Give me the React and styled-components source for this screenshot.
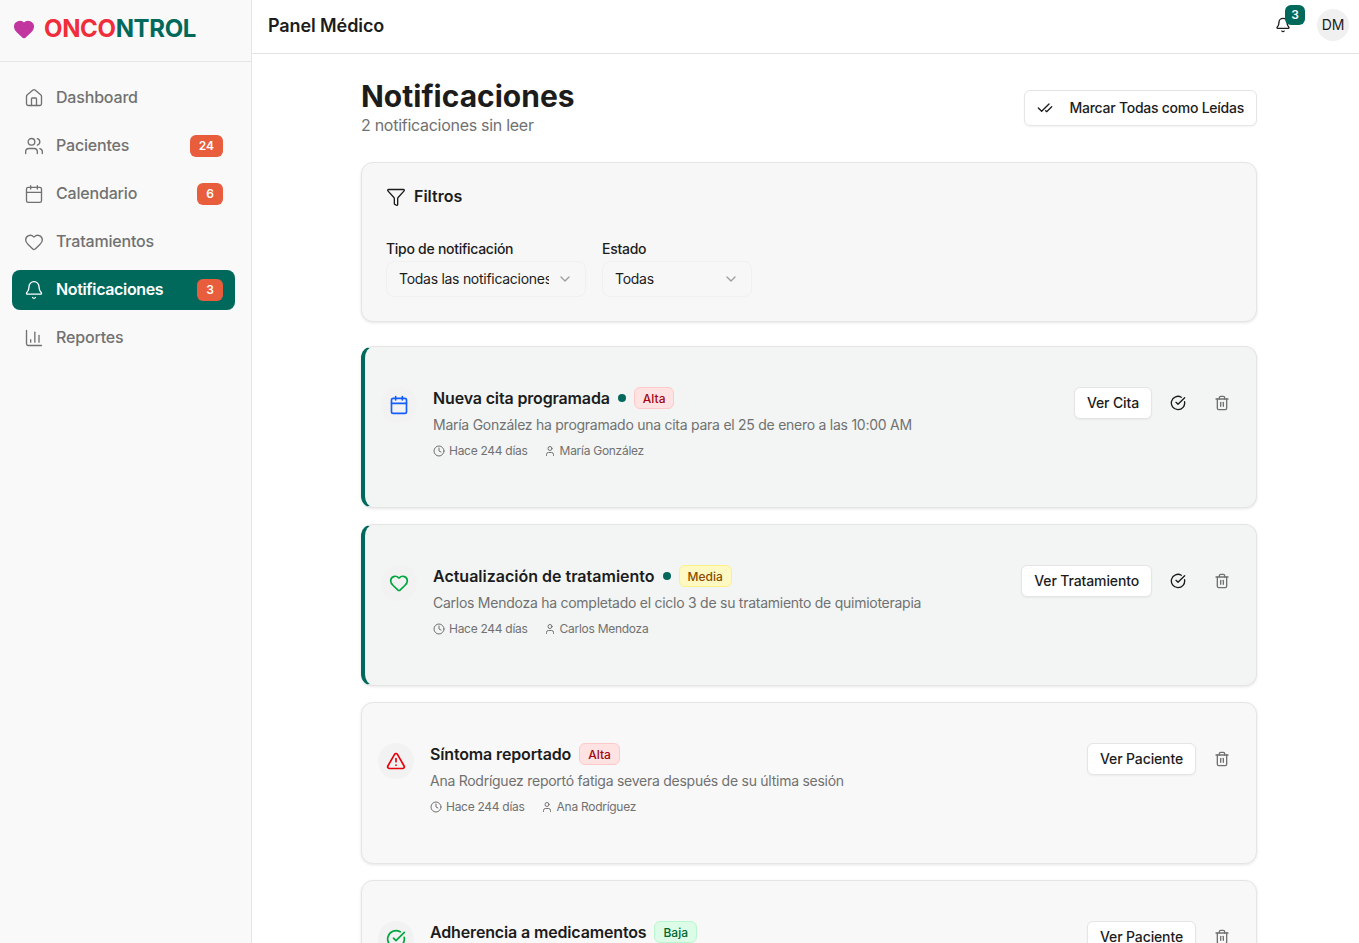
import React from "react";
import styled, { createGlobalStyle } from "styled-components";
import {
  House,
  Users,
  Calendar,
  Heart,
  Bell,
  ChartColumn,
  CheckCheck,
  Funnel,
  ChevronDown,
  Clock,
  User,
  CircleCheckBig,
  Trash2,
  TriangleAlert,
} from "lucide-react";

const GlobalStyle = createGlobalStyle`
  html, body {
    margin: 0;
    padding: 0;
    height: 100%;
    background: #fff;
    font-family: Inter, "Liberation Sans", sans-serif;
    color: #1c1c1c;
  }
  * { box-sizing: border-box; }
`;

const navItems = [
  { label: "Dashboard", icon: House },
  { label: "Pacientes", icon: Users, count: 24 },
  { label: "Calendario", icon: Calendar, count: 6 },
  { label: "Tratamientos", icon: Heart },
  { label: "Notificaciones", icon: Bell, count: 3, active: true },
  { label: "Reportes", icon: ChartColumn },
];

const notifications = [
  {
    title: "Nueva cita programada",
    text: "María González ha programado una cita para el 25 de enero a las 10:00 AM",
    person: "María González",
    priority: "Alta",
    action: "Ver Cita",
    icon: Calendar,
    color: "#155dfc",
    unread: true,
  },
  {
    title: "Actualización de tratamiento",
    text: "Carlos Mendoza ha completado el ciclo 3 de su tratamiento de quimioterapia",
    person: "Carlos Mendoza",
    priority: "Media",
    action: "Ver Tratamiento",
    icon: Heart,
    color: "#00a63e",
    unread: true,
    wideTitle: true,
  },
  {
    title: "Síntoma reportado",
    text: "Ana Rodríguez reportó fatiga severa después de su última sesión",
    person: "Ana Rodríguez",
    priority: "Alta",
    action: "Ver Paciente",
    icon: TriangleAlert,
    color: "#e7000b",
  },
  {
    title: "Adherencia a medicamentos",
    priority: "Baja",
    action: "Ver Paciente",
    icon: CircleCheckBig,
    color: "#00a63e",
  },
];

const priorityColors = {
  Alta: { bg: "#ffe2e2", border: "#ffc9c9", text: "#9f0712" },
  Media: { bg: "#fef9c2", border: "#fff085", text: "#894b00" },
  Baja: { bg: "#dcfce7", border: "#b9f8cf", text: "#016630" },
};

export default function App() {
  return (
    <Shell>
      <GlobalStyle />
      <Sidebar>
        <Brand>
          <Heart size={22} fill="#c236a0" color="#c236a0" />
          <BrandName>
            <span>ONCO</span>
            <b>NTROL</b>
          </BrandName>
        </Brand>
        <Nav>
          {navItems.map((item) => (
            <NavItem key={item.label} $active={item.active}>
              <item.icon size={20} strokeWidth={1.6} />
              <NavLabel $active={item.active}>{item.label}</NavLabel>
              {item.count && <NavCount>{item.count}</NavCount>}
            </NavItem>
          ))}
        </Nav>
      </Sidebar>
      <Main>
        <TopBar>
          <PageName>Panel Médico</PageName>
          <TopActions>
            <BellWrap>
              <Bell size={16} />
              <BellCount>3</BellCount>
            </BellWrap>
            <Avatar>DM</Avatar>
          </TopActions>
        </TopBar>
        <Content>
          <Heading>
            <div>
              <Title>Notificaciones</Title>
              <Subtitle>2 notificaciones sin leer</Subtitle>
            </div>
            <MarkAll>
              <CheckCheck size={16} />
              <ButtonText $tight>Marcar Todas como Leídas</ButtonText>
            </MarkAll>
          </Heading>
          <Filters>
            <FiltersTitle>
              <Funnel size={20} strokeWidth={1.6} />
              <span>Filtros</span>
            </FiltersTitle>
            <FilterRow>
              <div>
                <FilterLabel>Tipo de notificación</FilterLabel>
                <Select $width={200}>
                  <SelectValue>Todas las notificaciones</SelectValue>
                  <ChevronDown size={16} />
                </Select>
              </div>
              <div>
                <FilterLabel>Estado</FilterLabel>
                <Select $width={150}>
                  <SelectValue>Todas</SelectValue>
                  <ChevronDown size={16} />
                </Select>
              </div>
            </FilterRow>
          </Filters>
          <List>
            {notifications.map((n) => (
              <Card key={n.title} $unread={n.unread}>
                <IconCircle style={{ color: n.color }}>
                  <n.icon size={20} />
                </IconCircle>
                <CardBody>
                  <CardTitleRow>
                    <CardTitle $wide={n.wideTitle}>{n.title}</CardTitle>
                    {n.unread && <Dot />}
                    <Priority $level={n.priority}>{n.priority}</Priority>
                  </CardTitleRow>
                  {n.text && <CardText>{n.text}</CardText>}
                  {n.person && (
                    <Meta>
                      <MetaItem>
                        <Clock size={12} />
                        Hace 244 días
                      </MetaItem>
                      <MetaItem>
                        <User size={12} />
                        {n.person}
                      </MetaItem>
                    </Meta>
                  )}
                </CardBody>
                <CardActions>
                  <ActionButton>
                    <ButtonText>{n.action}</ButtonText>
                  </ActionButton>
                  {n.unread && (
                    <IconButton>
                      <CircleCheckBig size={16} />
                    </IconButton>
                  )}
                  <IconButton $muted>
                    <Trash2 size={16} />
                  </IconButton>
                </CardActions>
              </Card>
            ))}
          </List>
        </Content>
      </Main>
    </Shell>
  );
}

const Shell = styled.div`
  display: flex;
  height: 100vh;
  overflow: hidden;
`;

const Sidebar = styled.aside`
  width: 252px;
  flex-shrink: 0;
  background: #f9f9f9;
  border-right: 1px solid #e5e5e5;
`;

const Brand = styled.div`
  height: 62px;
  padding: 0 13px 4px;
  display: flex;
  align-items: center;
  gap: 9px;
  border-bottom: 1px solid #e5e5e5;
`;

const BrandName = styled.div`
  font-size: 24px;
  font-weight: 700;
  letter-spacing: -0.35px;
  span { color: #f02d3a; }
  b { color: #00695c; font-weight: 700; }
`;

const Nav = styled.nav`
  padding: 16px 16px 0 12px;
  display: flex;
  flex-direction: column;
  gap: 8px;
`;

const NavItem = styled.div`
  height: 40px;
  padding: 0 12px;
  display: flex;
  align-items: center;
  gap: 12px;
  border-radius: 8px;
  font-size: 16px;
  font-weight: ${(p) => (p.$active ? 600 : 500)};
  color: ${(p) => (p.$active ? "#fff" : "#717171")};
  background: ${(p) => (p.$active ? "#00695c" : "transparent")};
`;

const NavLabel = styled.span`
  flex: 1;
  padding-bottom: 2px;
  letter-spacing: ${(p) => (p.$active ? "-0.35px" : "-0.18px")};
`;

const NavCount = styled.span`
  height: 22px;
  padding: 0 9px 2px;
  display: flex;
  align-items: center;
  border-radius: 6px;
  background: #e85d3c;
  color: #fff;
  font-size: 12px;
  font-weight: 600;
`;

const Main = styled.div`
  flex: 1;
  min-width: 0;
  display: flex;
  flex-direction: column;
`;

const TopBar = styled.header`
  height: 54px;
  flex-shrink: 0;
  padding: 0 10px 4px 16px;
  display: flex;
  align-items: center;
  justify-content: space-between;
  border-bottom: 1px solid #e5e5e5;
`;

const PageName = styled.h2`
  margin: 1px 0 0;
  font-size: 18px;
  font-weight: 600;
  letter-spacing: -0.1px;
`;

const TopActions = styled.div`
  display: flex;
  align-items: center;
  gap: 26px;
`;

const BellWrap = styled.div`
  position: relative;
  display: flex;
`;

const BellCount = styled.span`
  position: absolute;
  top: -12px;
  left: 10px;
  width: 20px;
  height: 20px;
  display: flex;
  align-items: center;
  justify-content: center;
  border-radius: 6px;
  background: #00695c;
  color: #fff;
  font-size: 12px;
  font-weight: 600;
`;

const Avatar = styled.div`
  width: 32px;
  height: 32px;
  display: flex;
  align-items: center;
  justify-content: center;
  border-radius: 50%;
  background: #f0f0f0;
  font-size: 14px;
`;

const Content = styled.main`
  width: 896px;
  margin-left: 109px;
  padding-top: 24px;
`;

const Heading = styled.div`
  display: flex;
  justify-content: space-between;
  align-items: center;
  margin-bottom: 24px;
`;

const Title = styled.h1`
  margin: 0;
  font-size: 30px;
  line-height: 36px;
  font-weight: 700;
`;

const Subtitle = styled.p`
  margin: 0 0 2px;
  font-size: 16px;
  line-height: 22px;
  letter-spacing: -0.28px;
  color: #717171;
`;

const MarkAll = styled.button`
  height: 36px;
  padding: 0 12px;
  display: flex;
  align-items: center;
  gap: 16px;
  background: #fff;
  border: 1px solid #e5e5e5;
  border-radius: 6px;
  box-shadow: 0 1px 2px rgba(0, 0, 0, 0.05);
  font: 500 14px Inter, sans-serif;
  color: #1c1c1c;
`;

const ButtonText = styled.span`
  display: block;
  padding-bottom: 2px;
  letter-spacing: ${(p) => (p.$tight ? "-0.25px" : "-0.13px")};
`;

const Filters = styled.section`
  height: 160px;
  padding: 24px;
  margin-bottom: 24px;
  background: #f7f7f7;
  border: 1px solid #e5e5e5;
  border-radius: 12px;
  box-shadow: 0 1px 3px rgba(0, 0, 0, 0.1);
`;

const FiltersTitle = styled.div`
  display: flex;
  align-items: center;
  gap: 8px;
  font-size: 16px;
  font-weight: 600;
  margin-bottom: 34px;
  height: 20px;
  span {
    padding-bottom: 2px;
  }
`;

const FilterRow = styled.div`
  display: flex;
  gap: 16px;
`;

const FilterLabel = styled.div`
  font-size: 14px;
  font-weight: 500;
  line-height: 15px;
  letter-spacing: -0.28px;
  margin-bottom: 5px;
`;

const Select = styled.div`
  width: ${(p) => p.$width}px;
  height: 36px;
  padding: 0 12px;
  display: flex;
  align-items: center;
  justify-content: space-between;
  gap: 8px;
  border: 1px solid #f0f0f0;
  border-radius: 8px;
  font-size: 14px;
  letter-spacing: -0.28px;
  svg {
    flex-shrink: 0;
    opacity: 0.4;
  }
`;

const SelectValue = styled.span`
  overflow: hidden;
  white-space: nowrap;
  padding-bottom: 2px;
`;

const List = styled.div`
  display: flex;
  flex-direction: column;
  gap: 16px;
`;

const Card = styled.article`
  min-height: 162px;
  flex-shrink: 0;
  padding: 40px 16px 40px 16px;
  display: flex;
  align-items: flex-start;
  gap: 16px;
  background: ${(p) => (p.$unread ? "#f2f5f4" : "#f8f8f8")};
  border: 1px solid #e5e5e5;
  border-left: ${(p) => (p.$unread ? "4px solid #00695c" : "1px solid #e5e5e5")};
  border-radius: 12px;
  box-shadow: 0 1px 3px rgba(0, 0, 0, 0.1);
`;

const IconCircle = styled.div`
  width: 36px;
  height: 36px;
  flex-shrink: 0;
  display: flex;
  align-items: center;
  justify-content: center;
  border-radius: 50%;
  background: #f2f2f2;
`;

const CardBody = styled.div`
  flex: 1;
  min-width: 0;
`;

const CardTitleRow = styled.div`
  display: flex;
  align-items: center;
  gap: 8px;
  height: 22px;
  margin-bottom: 6px;
`;

const CardTitle = styled.h3`
  margin: 0;
  font-size: 16px;
  font-weight: 600;
  letter-spacing: ${(p) => (p.$wide ? "0" : "-0.15px")};
`;

const Dot = styled.span`
  width: 8px;
  height: 8px;
  border-radius: 50%;
  background: #00695c;
`;

const Priority = styled.span`
  height: 22px;
  padding: 0 8px;
  display: flex;
  align-items: center;
  border-radius: 6px;
  font-size: 12px;
  font-weight: 500;
  background: ${(p) => priorityColors[p.$level].bg};
  border: 1px solid ${(p) => priorityColors[p.$level].border};
  color: ${(p) => priorityColors[p.$level].text};
`;

const CardText = styled.p`
  margin: 0 0 8px;
  font-size: 14px;
  line-height: 20px;
  letter-spacing: -0.26px;
  color: #717171;
`;

const Meta = styled.div`
  display: flex;
  gap: 16px;
  font-size: 12px;
  line-height: 16px;
  letter-spacing: -0.28px;
  color: #717171;
`;

const MetaItem = styled.span`
  display: flex;
  align-items: center;
  gap: 4px;
`;

const CardActions = styled.div`
  display: flex;
  align-items: center;
  gap: 8px;
`;

const ActionButton = styled.button`
  height: 32px;
  padding: 0 12px;
  background: #fff;
  border: 1px solid #e5e5e5;
  border-radius: 6px;
  box-shadow: 0 1px 2px rgba(0, 0, 0, 0.05);
  font: 500 14px Inter, sans-serif;
  color: #1c1c1c;
  white-space: nowrap;
`;

const IconButton = styled.button`
  width: 36px;
  height: 32px;
  padding: 0;
  display: flex;
  align-items: center;
  justify-content: center;
  background: transparent;
  border: none;
  color: ${(p) => (p.$muted ? "#717171" : "#1c1c1c")};
`;
